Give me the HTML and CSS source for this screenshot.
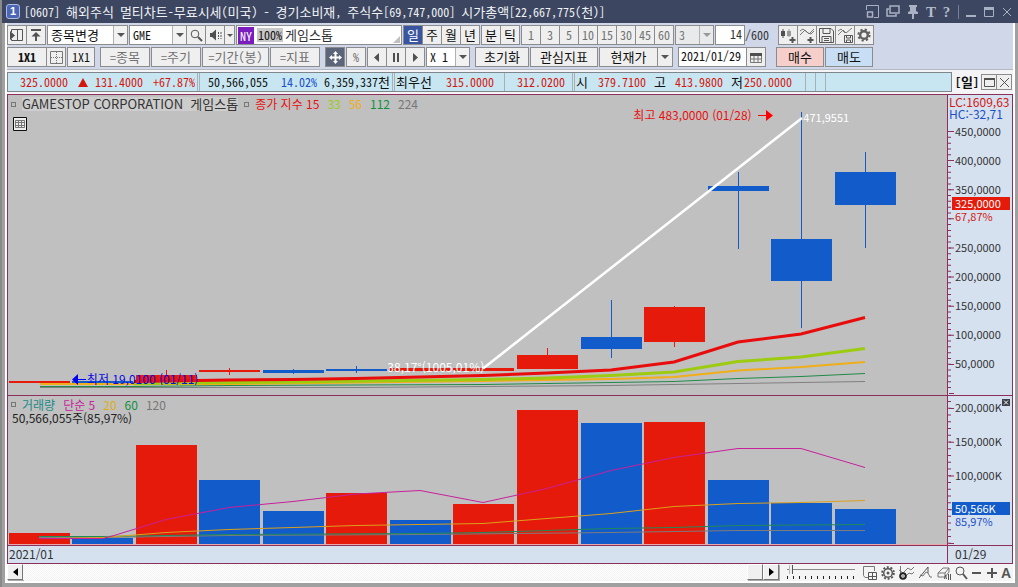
FILE: index.html
```html
<!DOCTYPE html>
<html lang="ko">
<head>
<meta charset="utf-8">
<title>[0607] 해외주식 멀티차트</title>
<link rel="stylesheet" href="styles.css">
</head>
<body>
<div class="window">
  <header class="titlebar">
    <span class="app-no">1</span>
    <h1 class="title">[0607] <span class="ko">해외주식</span> <span class="ko">멀티차트</span>-<span class="ko">무료시세</span>(<span class="ko">미국</span>) - <span class="ko">경기소비재</span>, <span class="ko">주식수</span>[69,747,000] <span class="ko">시가총액</span>[22,667,775(<span class="ko">천</span>)]</h1>
    <div class="win-tools">
      <button aria-label="축소"><svg width="13" height="13" viewBox="0 0 13 13"><path d="M.5 5V.5h12v12H8" class="s"/><path d="M1.500 12V7h5v5z" class="s2"/></svg></button>
      <button aria-label="복제"><svg width="14" height="13" viewBox="0 0 14 13"><path d="M4 1h9v7H4zM3 4H1v7h9V9" class="s2"/></svg></button>
      <button aria-label="고정"><svg width="12" height="14" viewBox="0 0 12 14"><path d="M2 0h8v2H9v4l2 1v2H7v5H5V9H1V7l2-1V2H2z" class="f"/></svg></button>
      <button class="serif">T</button>
      <button class="serif">?</button>
      <i class="bar"></i>
      <button aria-label="최소화"><svg width="11" height="12" viewBox="0 0 11 12"><path d="M0 9h10v2H0z" class="f"/></svg></button>
      <button aria-label="최대화"><svg width="11" height="12" viewBox="0 0 11 12"><path d="M.5 1.500h9v9h-9z" class="s"/><path d="M0 1h10v3H0z" class="f"/></svg></button>
      <button aria-label="닫기"><svg width="10" height="12" viewBox="0 0 10 12"><path d="M1 2l8 8M9 2l-8 8" class="s"/></svg></button>
    </div>
  </header>

  <main class="frame">
    <div class="toolbar">
      <div class="row">
        <div class="group">
          <button class="btn ic" aria-label="패널"><svg width="14" height="14" viewBox="0 0 14 14"><path d="M1.500 4V1.500h11v11H1.500V11M7.500 2v11" class="k"/><path d="M0 3l5 4.500L0 12z" class="kf"/></svg></button>
          <button class="btn ic" aria-label="맨위"><svg width="12" height="14" viewBox="0 0 12 14"><path d="M1 2h10M6 13V5" class="k2"/><path d="M1.500 8.500L6 4l4.500 4.500z" class="kf"/></svg></button>
        </div>
        <label class="combo w81 ko"><select aria-label="종목변경"><option>종목변경</option></select><i class="drop"></i></label>
        <div class="group">
          <label class="combo w58"><select aria-label="종목코드"><option>GME</option></select><i class="drop"></i></label>
          <button class="btn ic" aria-label="검색"><svg width="13" height="13" viewBox="0 0 13 13"><circle cx="5" cy="5" r="3.800" class="k"/><path d="M8 8l4 4" class="k2"/></svg></button>
          <button class="btn ic" aria-label="소리"><svg width="13" height="12" viewBox="0 0 13 12"><path d="M1 4h2l4-3.500v11L3 8H1z" class="kf"/><path d="M9.500 3v7M12 3v7" class="k" stroke-dasharray="2 1"/></svg></button>
          <button class="btn slim" aria-label="더보기"><i class="tri"></i></button>
        </div>
        <div class="field name w166"><b class="ny">NY</b><span class="pct">100%</span><span class="stock ko">게임스톱</span></div>
        <div class="group ko"><button class="btn ic on">일</button><button class="btn ic">주</button><button class="btn ic">월</button><button class="btn ic">년</button></div>
        <div class="group ko"><button class="btn ic">분</button><button class="btn ic">틱</button></div>
        <div class="group nums"><button class="btn ic">1</button><button class="btn ic">3</button><button class="btn ic">5</button><button class="btn ic">10</button><button class="btn ic">15</button><button class="btn ic">30</button><button class="btn ic">45</button><button class="btn ic">60</button></div>
        <label class="combo off w38"><select disabled aria-label="간격"><option>3</option></select><i class="drop"></i></label>
        <label class="count"><input class="field num w30" value="14" aria-label="봉 개수">/600</label>
        <div class="group end">
          <button class="btn ic" aria-label="봉 추가"><svg width="15" height="15" viewBox="0 0 15 15"><path d="M0 3h4v5H0zM1.500 1h1v9h-1z" class="kf"/><path d="M6 3h4v5H6zM7.500 1h1v8h-1z" fill="#999"/><path d="M11.500 9v6M8.500 12h6" class="k2"/></svg></button>
          <button class="btn ic" aria-label="선 추가"><svg width="15" height="15" viewBox="0 0 15 15"><path d="M0 7l5-5 4 4 5-5M0 3l3-2 5 4 3 1 3-3" class="k thin"/><path d="M10.500 9v6M7.500 12h6" class="k2"/></svg></button>
          <button class="btn ic" aria-label="저장"><svg width="15" height="15" viewBox="0 0 15 15"><path d="M.5.500H12l2.500 2.500v11.500H.5zM4 .5v5h7v-5M3 14.500v-6h9v6M5 10.500h5M5 12.500h5" class="k"/></svg></button>
          <button class="btn ic" aria-label="차트 저장"><svg width="15" height="15" viewBox="0 0 15 15"><path d="M0 7l5-5 3 3 6-5M0 3l3-2 4 4" class="k thin"/><path d="M6.500 7.500h8v7h-8zM8.500 8v2h4V8M8.500 14v-2h4v2" class="k"/></svg></button>
          <button class="btn ic" aria-label="설정"><svg width="14" height="14" viewBox="0 0 14 14"><circle cx="7" cy="7" r="3.800" fill="none" stroke="#606060" stroke-width="2.400"/><circle cx="7" cy="7" r="5.600" fill="none" stroke="#606060" stroke-width="2" stroke-dasharray="2.200 2.200"/></svg></button>
        </div>
      </div>
      <div class="row">
        <div class="group"><button class="btn w41 strong">1X1</button><button class="btn ic" aria-label="분할"><svg width="13" height="13" viewBox="0 0 13 13"><path d="M.5.500h12v12H.5z" class="k thin"/><path d="M6.500 1v11M1 6.500h11" class="k thin" stroke-dasharray="1 1"/></svg></button></div>
        <button class="btn w28">1X1</button>
        <button class="btn w50 dim sp">=<span class="ko">종목</span></button>
        <button class="btn w50 dim">=<span class="ko">주기</span></button>
        <button class="btn w67 dim">=<span class="ko">기간</span>(<span class="ko">봉</span>)</button>
        <button class="btn w50 dim">=<span class="ko">지표</span></button>
        <button class="btn ic dark sp" aria-label="이동"><svg width="13" height="13" viewBox="0 0 13 13"><path d="M6.500 2v9M2 6.500h9" stroke="#fff" stroke-width="2"/><path d="M6.500 0L9 3H4zM6.500 13L4 10h5zM0 6.500L3 4v5zM13 6.500L10 9V4z" fill="#fff"/></svg></button>
        <button class="btn ic dim">%</button>
        <div class="group">
          <button class="btn ic" aria-label="이전"><svg width="6" height="9" viewBox="0 0 6 9"><path d="M5 0v9L0 4.500z" class="kf"/></svg></button>
          <button class="btn ic" aria-label="정지"><svg width="7" height="9" viewBox="0 0 7 9"><path d="M0 0h2v9H0zM4 0h2v9H4z" class="kf"/></svg></button>
          <button class="btn ic" aria-label="다음"><svg width="6" height="9" viewBox="0 0 6 9"><path d="M1 0v9l5-4.500z" class="kf"/></svg></button>
        </div>
        <label class="combo w44"><select aria-label="배속"><option>X 1</option></select><i class="drop"></i></label>
        <button class="btn w54 sp ko">초기화</button>
        <button class="btn w68 ko">관심지표</button>
        <div class="group"><button class="btn w59 ko">현재가</button><button class="btn w16" aria-label="현재가 메뉴"><i class="tri"></i></button></div>
        <div class="group sp"><input class="field w70" value="2021/01/29" aria-label="날짜"><button class="btn ic" aria-label="달력"><svg width="12" height="11" viewBox="0 0 12 11"><path d="M.5 1.500h11v9H.5zM.5 7h11M4 4v6M8 4v6" class="k thin"/><path d="M0 1h12v3H0z" class="kf"/></svg></button></div>
        <button class="btn w48 buy end2 ko">매수</button>
        <button class="btn w48 sell ko">매도</button>
      </div>
    </div>

    <div class="quote">
      <div class="quote-bar">
        <span class="up c60">325.0000</span><span class="c20"><svg width="10" height="9" viewBox="0 0 10 9"><path d="M5 0l5 9H0z" fill="#d3180f"/></svg></span><span class="up c54">131.4000</span><span class="up c56 rule">+67.87%</span>
        <span class="c68">50,566,055</span><span class="blue c50">14.02%</span><span class="c76 rule">6,359,337<span class="ko">천</span></span>
        <span class="c36 ko">최우선</span><span class="up c60b line">315.0000</span><span class="up c70 rule">312.0200</span>
        <span class="c12 ko">시</span><span class="up c58">379.7100</span><span class="c20 ko">고</span><span class="up c56">413.9800</span><span class="c20 ko">저</span><span class="up c50">250.0000</span><span class="c14 line"></span><span class="c10 line"></span><span class="c10 line"></span>
      </div>
      <strong class="period">[<span class="ko">일</span>]</strong>
      <div class="group mini"><button class="btn" aria-label="최대화"><svg width="11" height="11" viewBox="0 0 11 11"><path d="M.5 1.500h10v8H.5z" class="k"/><path d="M0 1h11v2H0z" class="kf"/></svg></button><button class="btn" aria-label="닫기"><svg width="9" height="9" viewBox="0 0 9 9"><path d="M0 0l9 9M9 0L0 9" class="k"/></svg></button></div>
    </div>

    <div class="chart">
      <section class="pane price">
        <svg class="plot" viewBox="8 95 939 300" preserveAspectRatio="none" aria-label="가격 차트">
          <g fill="#e61a0a">
            <path d="M9 381h61v2H9zM136 375h61v6h-61zM166 370h1v5h-1zM199 370h61v2h-61zM229 368h1v7h-1zM390 368h61v3h-61zM453 368h61v3h-61zM517 355h61v14h-61zM547 348h1v7h-1zM644 307h61v35h-61zM674 306h1v41h-1z"/>
          </g>
          <g fill="#115bcb">
            <path d="M72 381h61v2H72zM263 370h61v3h-61zM293 369h1v5h-1zM326 369h61v2h-61zM356 366h1v7h-1zM581 337h61v12h-61zM611 300h1v58h-1zM708 186h61v5h-61zM738 172h1v77h-1zM771 239h61v42h-61zM801 112h1v216h-1zM835 172h61v33h-61zM865 152h1v96h-1z"/>
          </g>
          <g fill="none">
            <path d="M40 387.500H356L483 386.500 611 385.500 674 384.500 738 383.500 801 382.500 865 381.500" stroke="#808080"/>
            <path d="M40 386.500H134L229 385.500 483 384.500 611 382.500 674 381.500 738 378.500 801 376.500 865 373.500" stroke="#208a48"/>
            <path d="M40 384L229 384 356 382.500 483 381 611 379 674 377 738 370.500 801 367 865 362" stroke="#f0ae18" stroke-width="2"/>
            <path d="M134 384L166 383 293 382 483 379.500 547 378 611 375.500 674 372 738 361.500 801 357 865 348.500" stroke="#9ccb10" stroke-width="3"/>
            <path d="M134 381.500L166 381 229 380 293 379.500 356 378.500 420 377 483 375.500 547 373 611 370 674 362 738 342 801 334 865 317.500" stroke="#e80c0c" stroke-width="3"/>
            <path d="M483 368.500L802 118" stroke="#fff" stroke-width="2.500"/>
          </g>
        </svg>
        <div class="legend"><i class="box"></i><span class="corp">GAMESTOP CORPORATION&nbsp; 게임스톱</span><i class="box"></i><span class="t-red">종가 지수 15</span><span class="t-lime">33</span><span class="t-orange">56</span><span class="t-green">112</span><span class="t-gray">224</span></div>
        <button class="grid-btn" aria-label="표"><svg width="14" height="14" viewBox="0 0 14 14"><path d="M.5.500h13v13H.5z" fill="#eee" stroke="#111"/><path d="M2.500 3.500h9v7h-9zM2 5.500h10M2 8.500h10M5.500 3v8M8.500 3v8" fill="none" stroke="#777"/></svg></button>
        <span class="note high">최고 483,0000 (01/28) <svg width="15" height="11" viewBox="0 0 15 11"><path d="M0 5h10v1H0zM8 0l7 5.500L8 11z" fill="#f00"/></svg></span>
        <span class="note low"><svg width="14" height="11" viewBox="0 0 14 11"><path d="M14 5H5v1h9zM6 0L0 5.500 6 11z" fill="#00e"/></svg>최저 19,0100 (01/11)</span>
        <span class="note peak">471,9551</span>
        <span class="note angle">38,17°(1005,01%)</span>
      </section>
      <aside class="axis">
        <svg class="scale" viewBox="0 95 64 300" preserveAspectRatio="none"><path d="M1.500 131V393" stroke="#8c2f5a" stroke-width="3" stroke-dasharray="1 4.820"/><path d="M3.500 131V394" stroke="#8c2f5a" stroke-width="5" stroke-dasharray="1 28.110"/></svg>
        <span class="lim up">LC:1609,63</span><span class="lim lim2 blue">HC:-32,71</span>
        <ul class="labels p-labels"><li>450,0000</li><li>400,0000</li><li>350,0000</li><li></li><li>250,0000</li><li>200,0000</li><li>150,0000</li><li>100,0000</li><li>50,0000</li></ul>
        <div class="now p-now"><b>325,0000</b><span class="up">67,87%</span></div>
      </aside>

      <section class="pane volume">
        <svg class="plot" viewBox="8 396 939 149" preserveAspectRatio="none" aria-label="거래량 차트">
          <path fill="#e61a0a" d="M9 533h61v11H9zM136 445h61v99h-61zM326 493h61v51h-61zM453 504h61v40h-61zM517 410h61v134h-61zM644 422h61v122h-61z"/>
          <path fill="#115bcb" d="M72 538h61v6H72zM199 480h61v64h-61zM263 511h61v33h-61zM390 520h61v24h-61zM581 423h61v121h-61zM708 480h61v64h-61zM771 503h61v41h-61zM835 509h61v35h-61z"/>
          <path d="M8 544.500H947" stroke="#e8a8ac"/>
          <g fill="none">
            <path d="M39 537.500H103L229 535.500 420 534.500 611 532.500 738 530.500H865" stroke="#7c7c7c"/>
            <path d="M39 536.500H103L229 534.500 420 533.500 483 532.500 611 528.500 674 527.500 738 525.500 865 524.500" stroke="#208a58"/>
            <path d="M39 538.500L103 537.500 166 532.500 229 529.500 293 527.500 356 525.500 483 523.500 547 518.500 611 513.500 674 506.500 738 503.500 801 502.500 865 500.500" stroke="#dca01c"/>
            <path d="M39 538.500H103L114 535.500 166 519.500 229 507.500 293 501.500 356 494 420 490.500 483 502.500 547 488.500 611 470.500 674 457.500 738 448.500H801L865 467.500" stroke="#c8209c"/>
          </g>
        </svg>
        <div class="legend"><i class="box"></i><span class="t-teal">거래량</span><span class="t-pink">단순 5</span><span class="t-gold">20</span><span class="t-green">60</span><span class="t-gray">120</span></div>
        <p class="vol-now">50,566,055주(85,97%)</p>
      </section>
      <aside class="axis">
        <svg class="scale" viewBox="0 396 64 149" preserveAspectRatio="none"><path d="M1.500 401V544" stroke="#8c2f5a" stroke-width="3" stroke-dasharray="1 5.750"/><path d="M3.500 408V544" stroke="#8c2f5a" stroke-width="5" stroke-dasharray="1 32.750"/></svg>
        <ul class="labels v-labels"><li>200,000K</li><li>150,000K</li><li>100,000K</li></ul>
        <div class="now v-now"><b>50,566K</b><span class="blue">85,97%</span></div>
        <button class="pane-x" aria-label="지표 닫기"><svg width="8" height="7" viewBox="0 0 8 7"><path d="M0 0h8v7H0z" fill="#3c4048"/><path d="M2 1.500l4 4M6 1.500l-4 4" stroke="#fff"/></svg></button>
      </aside>

      <div class="date">2021/01</div>
      <div class="date right">01/29</div>
    </div>

    <footer class="bottom">
      <div class="scroll"><button class="raised" aria-label="왼쪽"><svg width="5" height="8" viewBox="0 0 5 8"><path d="M5 0v8L0 4z"/></svg></button><div class="track"></div><button class="raised" aria-label="이동 막대"></button><button class="raised" aria-label="오른쪽"><svg width="5" height="8" viewBox="0 0 5 8"><path d="M0 0v8l5-4z"/></svg></button></div>
      <div class="zoomer"><input type="range" value="3" aria-label="확대 비율"><i class="ticks"></i></div>
      <div class="tools">
        <button aria-label="창 추가"><svg width="14" height="14" viewBox="0 0 14 14"><path d="M5 11.500H2l-1.500-2v-9h11V5" class="k thin"/><path d="M5.500 6.500h8v7h-8zM9.500 6v8M5 10.500h9" class="k"/></svg></button>
        <button aria-label="설정"><svg width="14" height="14" viewBox="0 0 14 14"><circle cx="7" cy="7" r="4.300" fill="none" stroke="#555" stroke-width="1.500"/><circle cx="7" cy="7" r="5.900" fill="none" stroke="#555" stroke-width="1.800" stroke-dasharray="2 1.700"/><circle cx="7" cy="7" r="1.500" fill="#555"/></svg></button>
        <button aria-label="지표"><svg width="15" height="14" viewBox="0 0 15 14"><path d="M1.500 0v7M0 4l4 3 5-5 3 2 3-3M7 10l3-3 3 1 2-2" class="k thin"/><circle cx="4" cy="10" r="2.800" fill="#fff" stroke="#222" stroke-width="2"/><path d="M3 10h2" class="k"/></svg></button>
        <button aria-label="추세선"><svg width="14" height="14" viewBox="0 0 14 14"><path d="M1 9l3 1 3-4 2 1 2 4h2" class="k thin"/><path d="M0 12L9 1v6" class="k"/></svg></button>
        <button aria-label="모두 지우기"><svg width="14" height="14" viewBox="0 0 14 14"><path d="M1 7l5-5h6l-4 5zM1 7v4h7V7M8 11l4-5V2" class="k thin"/><path d="M7.500 13l1-4 1 4M11.500 8v6M13.500 8v6" class="k"/></svg></button>
        <button aria-label="확대경"><svg width="13" height="14" viewBox="0 0 13 14"><circle cx="5" cy="5" r="4" class="k"/><path d="M8 8l4 5" class="k2"/></svg></button>
        <button aria-label="축소"><svg width="10" height="12" viewBox="0 0 10 12"><path d="M0 6h9" class="k2"/></svg></button>
        <button aria-label="확대"><svg width="10" height="12" viewBox="0 0 10 12"><path d="M0 6h10M5 1v10" class="k2"/></svg></button>
        <button class="auto">A</button>
      </div>
    </footer>
  </main>
</div>
</body>
</html>
```
FILE: styles.css
```css
* { box-sizing: border-box; }
body {
  margin: 0;
  background: #a0a0a0;
  color: #111;
  font: 12px/14px "Noto Sans Mono CJK KR", "Noto Sans CJK KR", sans-serif;
}
button, input, select { font: inherit; color: inherit; margin: 0; padding: 0; border: 0; border-radius: 0; background: none; }
i { font-style: normal; }
svg { display: block; }
.ko { font-size: 13px; }

.window { display: flex; flex-direction: column; height: 100vh; border-left: 2px solid #8a8a8a; }
.titlebar { display: flex; align-items: center; flex: none; height: 23px; padding: 0 4px; background: #3c4660; color: #f0f2f6; }
.app-no { width: 14px; height: 15px; border: 1px solid #aebbe4; border-radius: 3px; background: #4a66b4; font: bold 11px/13px "Liberation Sans", sans-serif; text-align: center; color: #fff; }
.title { flex: 1; margin: 0 0 0 4px; font-size: 12px; line-height: 20px; font-weight: 400; white-space: nowrap; }
.win-tools { display: flex; align-items: center; gap: 7px; color: #b4bccd; padding-right: 2px; }
.win-tools .s { fill: none; stroke: #a9b1c3; }
.win-tools .s2 { fill: none; stroke: #a9b1c3; stroke-width: 1.5; }
.win-tools .f { fill: #a9b1c3; }
.win-tools .serif { width: 9px; font: bold 15px/16px "Liberation Serif", serif; }
.win-tools .bar { width: 1px; height: 14px; background: #78819a; }

.frame { flex: 1; display: flex; flex-direction: column; min-height: 0; border: solid #fff; border-width: 0 2px 2px; margin: 0 3px 4px 3px; background: #f4f4f6; }
.toolbar { display: flex; flex-direction: column; gap: 2px; padding: 2px 0; background: #cfd7e8; border-bottom: 1px solid #b4b8c0; flex: none; }
.row { display: flex; gap: 1px; height: 20px; }
.group { display: flex; flex: none; }
.group > * + * { margin-left: -1px; }
.sp { margin-left: 4px; }
.end { margin-left: 8px; }
.end2 { margin-left: 9px; }

.btn { display: flex; flex: none; align-items: center; justify-content: center; height: 20px; border: 1px solid #8c8c8e; background: #efefef; white-space: nowrap; }
.ic { width: 20px; }
.slim { width: 11px; }
.on { background: #3a55a0; color: #fff; }
.nums, .dim { color: #727272; }
.strong { font-weight: 700; }
.dark { background: #5c6678; }
.buy { background: #f6cfca; }
.sell { background: #c8def4; }
.k { fill: none; stroke: #555; }
.k2 { fill: none; stroke: #555; stroke-width: 2; }
.kf { fill: #505050; }
.thin { stroke: #777; }

.field { height: 20px; border: 1px solid #8c8c8e; background: #fff; padding: 0 2px 3px; }
.combo { display: flex; flex: none; height: 20px; border: 1px solid #8c8c8e; background: #fff; }
.combo select { flex: 1; min-width: 0; appearance: none; padding-left: 3px; opacity: 1; }
.drop { display: flex; align-items: center; justify-content: center; width: 14px; border-left: 1px solid #b0b0b0; background: #f2f2f2; }
.drop::after, .tri { content: ""; border: solid transparent; border-width: 4px 4px 0; border-top-color: #555; }
.slim .tri { border-width: 3px 3px 0; }
.off, .off .drop { background: #e9eaec; color: #777; }
.off .drop::after { border-top-color: #999; }
.count { display: flex; align-items: center; color: #333; }
.num { text-align: right; }
.name { position: relative; display: flex; align-items: center; padding: 0 1px; }
.name::after { content: ""; position: absolute; right: 1px; bottom: 1px; border: solid transparent; border-width: 0 0 7px 7px; border-bottom-color: #c0c0c0; }
.ny { width: 16px; margin-right: 3px; background: #7a1cc0; color: #fff; font-weight: 400; text-align: center; line-height: 17px; }
.pct { background: #c8c8c8; padding: 0 1px; }
.stock { margin-left: 2px; color: #333; }

.w16 { width: 16px; } .w28 { width: 28px; } .w30 { width: 30px; } .w38 { width: 39px; } .w41 { width: 40px; }
.w44 { width: 44px; } .w48 { width: 48px; } .w50 { width: 50px; } .w54 { width: 54px; } .w58 { width: 58px; }
.w59 { width: 59px; } .w67 { width: 67px; } .w68 { width: 68px; } .w70 { width: 69px; } .w81 { width: 81px; } .w166 { width: 166px; }

.quote { display: flex; align-items: center; flex: none; height: 24px; }
.quote-bar { display: flex; flex: 1; height: 20px; border: 1px solid #7e868c; background: #c8e6f2; line-height: 18px; white-space: nowrap; }
.quote-bar > span { flex: none; text-align: right; }
.quote-bar svg { display: inline-block; }
.up { color: #d3180f; }
.blue { color: #1a50c8; }
.rule { border-right: 3px double #a8b0b4; }
.line { border-right: 1px solid #a8b0b4; }
.quote-bar .rule, .quote-bar .line { padding-right: 2px; }
.quote-bar .c60b { width: 73px; padding-right: 10px; }
.quote-bar .c70 { width: 70px; padding-right: 7px; }
.c10 { width: 10px; } .c12 { width: 13px; } .c14 { width: 14px; } .c20 { width: 20px; } .c36 { width: 37px; } .c50 { width: 49px; }
.c54 { width: 55px; } .c56 { width: 57px; } .c58 { width: 58px; } .c60 { width: 60px; } .c68 { width: 68px; } .c76 { width: 78px; }
.period { padding: 0 2px 0 3px; }
.mini .btn { width: 16px; height: 16px; }
.mini { padding-right: 1px; }

.chart {
  flex: 1; min-height: 0; display: grid;
  grid-template: 300fr 149fr 17px / 1fr 64px;
  gap: 1px; padding: 1px; background: #8c2f5a;
  font-family: "Noto Sans CJK KR", sans-serif;
}
.chart > * { position: relative; min-height: 0; min-width: 0; }
.pane { background: #c0c0c0; }
.plot, .scale { position: absolute; inset: 0; width: 100%; height: 100%; }
.axis, .date { background: #d6e1f0; color: #333; }
.legend { position: relative; display: flex; align-items: center; gap: 8px; padding: 2px 3px; white-space: nowrap; }
.volume .legend { padding-bottom: 0; line-height: 13px; }
.box { width: 5px; height: 5px; margin-right: -2px; border: 1px solid #777; }
.corp { background: #cdcdcd; color: #333; font-size: 13px; line-height: 14px; }
.corp + .box { margin-left: -2px; }
.t-red { color: #e81010; } .t-lime { color: #9ccb10; } .t-orange { color: #f0ae18; } .t-green { color: #109040; }
.t-gray { color: #777; } .t-teal { color: #208a88; } .t-pink { color: #c8209c; } .t-gold { color: #dcae1c; }
.grid-btn { position: relative; display: block; margin: 4px 0 0 5px; }
.note { position: absolute; display: flex; align-items: center; gap: 6px; font-size: 12px; white-space: nowrap; color: #fff; }
.high { left: 66.6%; top: 13px; color: #e81010; }
.low { left: 6.8%; top: 277px; gap: 1px; color: #0a0ae0; }
.peak { left: 84.7%; top: 15px; font-size: 11px; }
.angle { left: 40.4%; top: 265px; }
.lim { position: absolute; left: 1px; top: 1px; line-height: 12px; }
.lim2 { top: 13px; }
.labels { position: absolute; left: 7px; margin: 0; padding: 0; list-style: none; font-size: 11px; }
.p-labels { top: 7%; bottom: 6%; display: flex; flex-direction: column; justify-content: space-around; }
.labels li { height: 14px; }
.v-labels { top: 3%; bottom: 42%; display: flex; flex-direction: column; justify-content: space-between; }
.now { position: absolute; left: 4px; right: 2px; font-size: 11px; }
.now b { display: block; height: 13px; padding-left: 3px; line-height: 13px; font-weight: 400; color: #fff; }
.now span { display: block; padding-left: 3px; line-height: 12px; }
.p-now { top: 34%; }
.p-now b { background: #e61a0a; }
.v-now { top: 71%; }
.v-now b { background: #115bcb; }
.pane-x { position: absolute; top: 3px; right: 2px; }
.vol-now { position: relative; margin: 0 0 0 4px; line-height: 13px; color: #222; }
.date { padding-left: 1px; line-height: 16px; }
.date.right { padding-left: 7px; }

.bottom { display: flex; flex: none; height: 17px; background: #f4f4f4; }
.scroll { display: flex; flex: 1; height: 16px; }
.raised { display: flex; align-items: center; justify-content: center; width: 16px; background: #f0f0f0; border: 1px solid; border-color: #fff #777 #777 #fff; box-shadow: 1px 1px 0 #aaa; }
.track { flex: 1; background: repeating-conic-gradient(#f2f2f2 0 25%, #fff 0 50%) 0 0 / 2px 2px; }
.zoomer { width: 84px; padding: 1px 6px 0 8px; }
.zoomer input { display: block; width: 68px; height: 9px; appearance: none; background: linear-gradient(#888, #888) 0 4px / 100% 1px no-repeat; }
.zoomer input::-webkit-slider-thumb { appearance: none; width: 4px; height: 9px; background: #eee; border-right: 1px solid #555; border-left: 1px solid #bbb; }
.ticks { display: block; width: 67px; height: 3px; margin-top: 2px; background: repeating-linear-gradient(90deg, #222 0 1px, transparent 1px 6px); }
.tools { display: flex; align-items: center; gap: 3px; width: 150px; justify-content: space-between; padding-right: 2px; }
.auto { font: bold 14px/14px "Liberation Sans", sans-serif; color: #555; }
```
